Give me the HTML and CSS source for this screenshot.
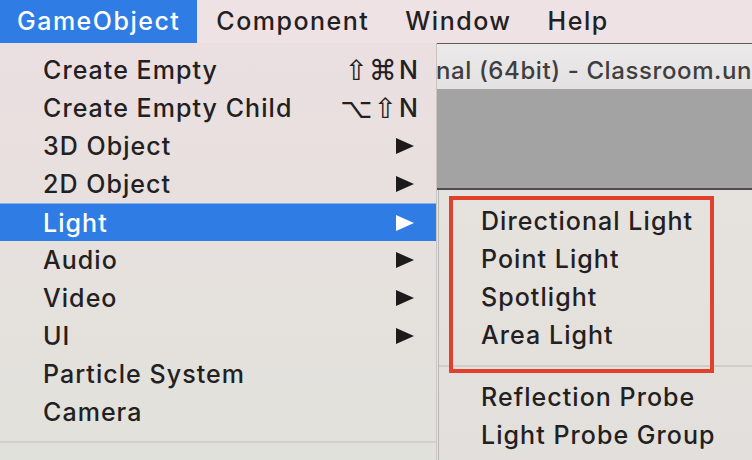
FILE: index.html
```html
<!DOCTYPE html>
<html>
<head>
<meta charset="utf-8">
<link rel="stylesheet" href="styles.css">
</head>
<body>
<div class="screen">
  <div class="menubar">
    <div class="mb-item active">GameObject</div>
    <div class="mb-item">Component</div>
    <div class="mb-item">Window</div>
    <div class="mb-item">Help</div>
  </div>
  <div class="desk">
    <div class="bgwin">
      <div class="bgwin-title">nal (64bit) - Classroom.unity - Classroom - PC</div>
      <div class="bgwin-toolbar"></div>
    </div>

    <div class="menu main-menu">
      <div class="row"><span class="label">Create Empty</span><span class="key"><span class="sym">⇧⌘</span>N</span></div>
      <div class="row"><span class="label">Create Empty Child</span><span class="key"><span class="sym">⌥⇧</span>N</span></div>
      <div class="row"><span class="label">3D Object</span><svg class="arrow" viewBox="0 0 18 16"><polygon points="0,0 18,8 0,16"/></svg></div>
      <div class="row"><span class="label">2D Object</span><svg class="arrow" viewBox="0 0 18 16"><polygon points="0,0 18,8 0,16"/></svg></div>
      <div class="row selected"><span class="label">Light</span><svg class="arrow" viewBox="0 0 18 16"><polygon points="0,0 18,8 0,16"/></svg></div>
      <div class="row"><span class="label">Audio</span><svg class="arrow" viewBox="0 0 18 16"><polygon points="0,0 18,8 0,16"/></svg></div>
      <div class="row"><span class="label">Video</span><svg class="arrow" viewBox="0 0 18 16"><polygon points="0,0 18,8 0,16"/></svg></div>
      <div class="row"><span class="label">UI</span><svg class="arrow" viewBox="0 0 18 16"><polygon points="0,0 18,8 0,16"/></svg></div>
      <div class="row"><span class="label">Particle System</span></div>
      <div class="row"><span class="label">Camera</span></div>
      <div class="sep"></div>
    </div>

    <div class="menu sub-menu">
      <div class="row"><span class="label">Directional Light</span></div>
      <div class="row"><span class="label">Point Light</span></div>
      <div class="row"><span class="label">Spotlight</span></div>
      <div class="row"><span class="label">Area Light</span></div>
      <div class="sep"></div>
      <div class="row"><span class="label">Reflection Probe</span></div>
      <div class="row"><span class="label">Light Probe Group</span></div>
    </div>

    <div class="highlight-box"></div>
  </div>
</div>
</body>
</html>
```

FILE: styles.css
```css
* { box-sizing: border-box; }
html, body { margin: 0; padding: 0; }
body {
  width: 752px;
  height: 460px;
  overflow: hidden;
  font-family: Inter, "Open Sans", "Liberation Sans", "DejaVu Sans", sans-serif;
  color: #222;
  background: #efe3e6;
}
.screen {
  width: 752px;
  height: 460px;
  display: flex;
  flex-direction: column;
}
.menubar {
  height: 43px;
  display: flex;
  background: #efe2e5;
  font-size: 25px;
  font-weight: 500;
  letter-spacing: 1.5px;
}
.mb-item {
  padding: 0 17px 0 19px;
  line-height: 42px;
  color: #232021;
}
.mb-item.active {
  background: #2f7de4;
  color: #fff;
  padding: 0 17px 0 17px;
}
.desk {
  position: relative;
  flex: 1;
}
.bgwin {
  position: absolute;
  left: 437px;
  top: 0;
  width: 340px;
  height: 147px;
  border-top: 1px solid #5d595a;
  display: flex;
  flex-direction: column;
}
.bgwin-title {
  height: 45px;
  background: linear-gradient(#ebe9e9, #e3e1e1);
  font-size: 24px;
  font-weight: 500;
  letter-spacing: 0.6px;
  color: #3f3e3e;
  white-space: nowrap;
  overflow: hidden;
  line-height: 44px;
  padding-top: 5px;
  text-indent: -1px;
}
.bgwin-toolbar {
  flex: 1;
  background: #a3a3a3;
  border-bottom: 2px solid #4d4d4d;
}
.menu {
  position: absolute;
  font-size: 25px;
  font-weight: 500;
  letter-spacing: 1.05px;
  color: #232021;
}
.main-menu {
  left: 0;
  top: 0;
  width: 437px;
  height: 420px;
  padding-top: 8px;
  background: linear-gradient(#ebdfe1, #e5e1dd 60%, #e1e1dc);
  border-right: 1px solid #c9c4c4;
}
.row {
  height: 38px;
  display: flex;
  align-items: center;
  padding: 0 22px 0 43px;
}
.row .label { flex: 1; white-space: nowrap; }
.row .key {
  display: flex;
  align-items: center;
  margin-right: -4px;
  letter-spacing: 0;
}
.row .key .sym {
  font-family: "DejaVu Sans", sans-serif;
  font-size: 28px;
  font-weight: 400;
  letter-spacing: 1px;
  margin-right: 1px;
}
.arrow {
  width: 18px;
  height: 16px;
  fill: #1c1a1b;
}
.row.selected {
  background: #2f7de4;
  color: #fff;
  border-top: 1px solid #7fb2ee;
}
.row.selected .arrow { fill: #fff; }
.main-menu .sep {
  height: 22px;
  display: flex;
  align-items: center;
}
.main-menu .sep::after {
  content: "";
  flex: 1;
  height: 2px;
  background: #d2d1cd;
}
.sub-menu {
  left: 438px;
  top: 147px;
  width: 330px;
  height: 290px;
  padding-top: 12px;
  background: linear-gradient(#e6e2de, #e2e0dc);
  border-left: 1px solid #b9b5b4;
}
.sub-menu .row { padding-left: 42px; }
.sub-menu .sep {
  height: 24px;
  display: flex;
  align-items: center;
}
.sub-menu .sep::after {
  content: "";
  flex: 1;
  height: 2px;
  background: #d0cecb;
}
.highlight-box {
  position: absolute;
  left: 449px;
  top: 153px;
  width: 265px;
  height: 177px;
  border: 4px solid #e0402c;
}
```
